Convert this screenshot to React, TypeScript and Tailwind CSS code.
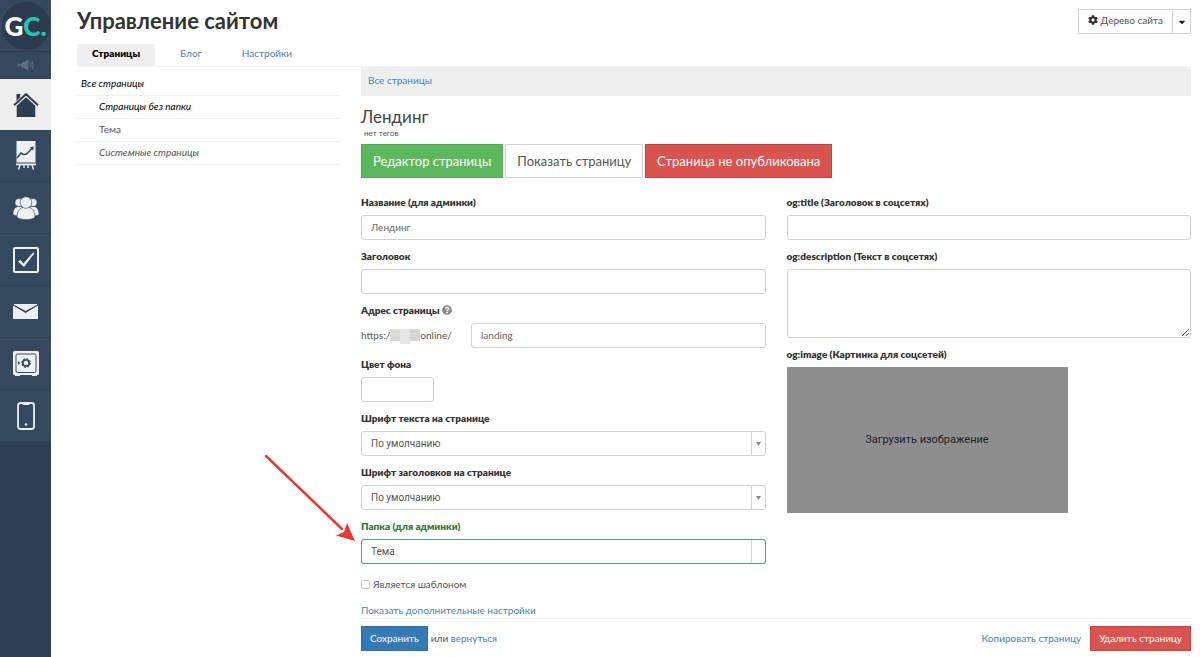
import { useState, type ReactNode } from "react";
import { FaCog, FaCaretDown, FaQuestionCircle } from "react-icons/fa";
import clsx from "clsx";

const tabs = ["Страницы", "Блог", "Настройки"];

const folders = [
  { name: "Все страницы", className: "pl-1 italic text-black" },
  { name: "Страницы без папки", className: "pl-[22px] italic text-black" },
  { name: "Тема", className: "pl-[22px] text-[#555]" },
  { name: "Системные страницы", className: "pl-[22px] italic text-[#555]" },
];

function HomeIcon() {
  return (
    <svg width="26" height="26" viewBox="0 0 26 26">
      <path d="M3.5 2h3.700v3.200L3.500 8.800z" fill="#2c3e50" />
      <path
        d="M1 13.300 13 2.200l12 11.100"
        fill="none"
        stroke="#2c3e50"
        strokeWidth="2"
      />
      <path d="M13 5.200 22.300 13.800V25H3.700V13.800z" fill="#2c3e50" />
    </svg>
  );
}

function ChartIcon() {
  return (
    <svg width="22" height="30" viewBox="0 0 22 30">
      <path d="M1.500 0h19v21.500h-19z" fill="#ecf0f1" />
      <path d="M1 22.500h20v1.800H1z" fill="#ecf0f1" />
      <path
        d="m5 24-1.500 4.500M9 24v3M13 24v3M17 24l1.500 4.500"
        stroke="#ecf0f1"
        strokeWidth="1.4"
      />
      <path
        d="m2 17 4-5 2.500 1.500 3-.5 6-6"
        fill="none"
        stroke="#34495e"
        strokeWidth="1.5"
      />
      <path d="m18.800 5.500-.5 4-3.500-3z" fill="#34495e" />
    </svg>
  );
}

function UsersIcon() {
  return (
    <svg
      width="26"
      height="24"
      viewBox="0 0 26 24"
      fill="#ecf0f1"
      stroke="#34495e"
      strokeWidth=".6"
    >
      <circle cx="6" cy="6.500" r="4" />
      <circle cx="20" cy="6.500" r="4" />
      <path d="M0 18.500c0-5 2-8 6-8s6 2 6 9c-4 1-9 1-12-1zM26 18.500c0-5-2-8-6-8s-6 2-6 9c4 1 9 1 12-1z" />
      <path d="M4 21c0-6 3-10 9-10s9 4 9 10c-3 3.500-15 3.500-18 0z" />
      <circle cx="13" cy="6.500" r="5.800" />
    </svg>
  );
}

function CheckIcon() {
  return (
    <svg width="26" height="26" viewBox="0 0 26 26" fill="none">
      <rect
        x="1"
        y="1"
        width="24"
        height="24"
        rx="1"
        stroke="#ecf0f1"
        strokeWidth="2"
      />
      <path d="m5 14.500 2.500-1.500 3 3.500L20 5.500l1.500.7L11 20z" fill="#ecf0f1" />
    </svg>
  );
}

function MailIcon() {
  return (
    <svg width="25" height="15" viewBox="0 0 25 15">
      <path d="M0 1.500V15h25V1.500L12.500 9z" fill="#ecf0f1" />
      <path d="M1.500 0h22l1 .5L12.500 7 .5.5z" fill="#ecf0f1" />
    </svg>
  );
}

function SafeIcon() {
  return (
    <svg width="26" height="26" viewBox="0 0 26 26" fill="none">
      <path
        d="M1.500 0h23A1.500 1.500 0 0 1 26 1.500v21a1.500 1.500 0 0 1-1.500 1.500H24v1h-5v-1H7v1H2v-1h-.5A1.500 1.500 0 0 1 0 22.500v-21A1.500 1.500 0 0 1 1.500 0z"
        fill="#ecf0f1"
      />
      <rect x="3" y="3" width="20" height="18.500" rx="1.500" stroke="#34495e" />
      <circle cx="13" cy="12" r="3.200" stroke="#34495e" strokeWidth="1.800" />
      <circle
        cx="13"
        cy="12"
        r="4.500"
        stroke="#34495e"
        strokeWidth="1"
        strokeDasharray="1.770 1.770"
      />
      <path d="m5 10 2.300 2L5 14z" fill="#34495e" />
    </svg>
  );
}

function PhoneIcon() {
  return (
    <svg width="18" height="28" viewBox="0 0 18 28" fill="none">
      <rect
        x="1"
        y="1"
        width="16"
        height="26"
        rx="2.500"
        stroke="#ecf0f1"
        strokeWidth="1.800"
      />
      <path d="M5 1h8l-1 2H6z" fill="#ecf0f1" />
      <circle cx="9" cy="22.500" r="1.300" fill="#ecf0f1" />
    </svg>
  );
}

const menu = [
  { label: "Аналитика", icon: <ChartIcon /> },
  { label: "Пользователи", icon: <UsersIcon /> },
  { label: "Задачи", icon: <CheckIcon /> },
  { label: "Сообщения", icon: <MailIcon /> },
  { label: "Продажи", icon: <SafeIcon /> },
  { label: "Приложение", icon: <PhoneIcon /> },
];

function Sidebar() {
  return (
    <nav className="w-[51px] shrink-0 bg-[#2f4052]">
      <a
        href="#"
        className="flex h-[51px] items-center justify-center bg-[#34495e]"
      >
        <span className="flex size-12 items-center justify-center rounded-full bg-[#2b3b4d] text-[26px] leading-none font-black text-white">
          G<span className="text-[#1fc8b4]">C.</span>
        </span>
      </a>
      <button
        aria-label="Новости"
        className="flex h-7 w-full items-center justify-center border-y border-[#2c3e50] bg-[#34495e]"
      >
        <svg width="17" height="12" viewBox="0 0 17 12" fill="#5b6e82">
          <circle cx="2" cy="6" r="1.500" />
          <path d="M4 4.500 11.500.500v11L4 7.500z" />
          <path
            d="M13 3c1.300 2 1.300 4 0 6M15 2c1.500 3 1.500 5 0 8"
            fill="none"
            stroke="#5b6e82"
          />
        </svg>
      </button>
      <a
        href="#"
        aria-label="Главная"
        className="flex h-[51px] items-center justify-center bg-[#eee]"
      >
        <HomeIcon />
      </a>
      {menu.map((item) => (
        <a
          key={item.label}
          href="#"
          aria-label={item.label}
          className="flex h-[52px] items-center justify-center border-b border-[#2e4154] bg-[#34495e]"
        >
          {item.icon}
        </a>
      ))}
    </nav>
  );
}

function Field({
  id,
  label,
  hint,
  green,
  children,
}: {
  id: string;
  label: string;
  hint?: ReactNode;
  green?: boolean;
  children: ReactNode;
}) {
  return (
    <div className="mb-2">
      <div className="mb-[3px] flex h-[18px] items-center gap-0.5 pb-0.5">
        <label
          htmlFor={id}
          className={clsx(
            "font-extrabold",
            green ? "text-[#3c763d]" : "text-[#333]",
          )}
        >
          {label}
        </label>
        {hint}
      </div>
      {children}
    </div>
  );
}

const inputClass =
  "block h-[25px] w-full rounded-[3px] border border-[#d2d2d2] bg-white px-[9px] pb-0.5 text-[#666] outline-none";

function Select({
  id,
  options,
  green,
}: {
  id: string;
  options: string[];
  green?: boolean;
}) {
  return (
    <div
      className={clsx(
        "relative rounded-[3px] border bg-white",
        green ? "border-green-700/70" : "border-[#d2d2d2]",
      )}
    >
      <select
        id={id}
        className="block h-[23px] w-full appearance-none bg-transparent pr-5 pl-[9px] font-['Roboto',sans-serif] text-[10px] text-[#555] outline-none"
      >
        {options.map((option) => (
          <option key={option}>{option}</option>
        ))}
      </select>
      <span className="pointer-events-none absolute inset-y-0 right-0 flex w-[14px] items-center justify-center border-l border-[#d2d2d2]">
        {!green && (
          <svg width="5" height="4" viewBox="0 0 5 4" fill="#888">
            <path d="M0 0h5L2.500 4z" />
          </svg>
        )}
      </span>
    </div>
  );
}

export default function App() {
  const [activeTab, setActiveTab] = useState("Страницы");
  const [title, setTitle] = useState("Лендинг");
  const [slug, setSlug] = useState("landing");

  return (
    <div className="flex min-h-screen bg-white font-['Lato',sans-serif] text-[10px] leading-[18px] text-[#555]">
      <Sidebar />

      <main className="relative min-w-0 flex-1 pr-[9px] pl-[26px]">
        <header className="flex h-11 items-start justify-between">
          <h1 className="pt-2 text-[22px] leading-[26px] font-bold text-[#333]">
            Управление сайтом
          </h1>
          <div className="mt-[9px] flex h-[25px] border border-[#d2d2d2]">
            <button className="flex items-center gap-[3px] px-[9px] pb-1">
              <FaCog className="size-[10px] text-[#333]" />
              Дерево сайта
            </button>
            <button
              aria-label="Ещё"
              className="flex w-[18px] items-center justify-center border-l border-[#d2d2d2]"
            >
              <FaCaretDown className="size-[10px] text-[#222]" />
            </button>
          </div>
        </header>

        <div className="flex h-[23px] gap-[10px] border-b border-[#f3f3f3]">
          {tabs.map((tab) => (
            <button
              key={tab}
              onClick={() => setActiveTab(tab)}
              className={clsx(
                "px-[15px] pb-1",
                tab === activeTab
                  ? "bg-[#efefef] font-extrabold text-black"
                  : "text-[#4a7fb8]",
              )}
            >
              {tab}
            </button>
          ))}
        </div>

        <div className="flex gap-[21px]">
          <ul className="w-[263px] shrink-0 pt-[6px]">
            {folders.map((folder) => (
              <li
                key={folder.name}
                className={clsx(
                  "flex h-[23px] items-center border-b border-[#f0f0f0] pb-0.5",
                  folder.className,
                )}
              >
                <a href="#">{folder.name}</a>
              </li>
            ))}
          </ul>

          <section className="min-w-0 flex-1">
            <div className="flex h-[29px] items-center bg-[#efefef] px-[7px] pb-1">
              <a href="#" className="text-[#4a7fb8]">
                Все страницы
              </a>
            </div>
            <h2 className="mt-[10px] text-[17px] leading-[22px] text-[#444]">
              Лендинг
            </h2>
            <p className="pl-[3px] text-[8px] leading-[10px]">нет тегов</p>
            <div className="mt-[6px] flex gap-0.5 text-[13px]">
              <button className="h-[34px] border border-[#4cae4c] bg-[#5cb85c] px-[11px] text-white">
                Редактор страницы
              </button>
              <button className="h-[34px] border border-[#d2d2d2] bg-white px-[11px]">
                Показать страницу
              </button>
              <button className="h-[34px] border border-[#d43f3a] bg-[#d9534f] px-[11px] text-white">
                Страница не опубликована
              </button>
            </div>

            <div className="mt-4 grid grid-cols-2 gap-[21px]">
              <div>
                <Field id="name" label="Название (для админки)">
                  <input
                    id="name"
                    className={inputClass}
                    value={title}
                    onChange={(e) => setTitle(e.target.value)}
                  />
                </Field>
                <Field id="heading" label="Заголовок">
                  <input id="heading" className={inputClass} />
                </Field>
                <Field
                  id="slug"
                  label="Адрес страницы"
                  hint={<FaQuestionCircle className="size-[10px] text-[#888]" />}
                >
                  <div className="flex items-center">
                    <div className="flex w-[110px] shrink-0 items-center pb-0.5">
                      https:/
                      <span className="flex h-3 w-[30px]">
                        <span className="flex-1 bg-[#d9dbd9]" />
                        <span className="h-[15px] flex-1 bg-[#e6e6e6]" />
                        <span className="flex-1 bg-[#d4d6d4]" />
                      </span>
                      online/
                    </div>
                    <input
                      id="slug"
                      className={inputClass}
                      value={slug}
                      onChange={(e) => setSlug(e.target.value)}
                    />
                  </div>
                </Field>
                <Field id="background" label="Цвет фона">
                  <div className="w-[73px]">
                    <input id="background" className={inputClass} />
                  </div>
                </Field>
                <Field id="text-font" label="Шрифт текста на странице">
                  <Select id="text-font" options={["По умолчанию"]} />
                </Field>
                <Field id="heading-font" label="Шрифт заголовков на странице">
                  <Select id="heading-font" options={["По умолчанию"]} />
                </Field>
                <Field id="folder" label="Папка (для админки)" green>
                  <Select id="folder" options={["Тема"]} green />
                </Field>
                <label className="mt-3 flex items-center gap-[3px] pb-0.5 leading-4">
                  <input
                    type="checkbox"
                    className="size-[9px] appearance-none rounded-[2px] border border-[#ccc] checked:bg-[#337ab7]"
                  />
                  Является шаблоном
                </label>
              </div>

              <div>
                <Field id="og-title" label="og:title (Заголовок в соцсетях)">
                  <input id="og-title" className={inputClass} />
                </Field>
                <Field
                  id="og-description"
                  label="og:description (Текст в соцсетях)"
                >
                  <textarea
                    id="og-description"
                    className="block h-[69px] w-full rounded-[3px] border border-[#d2d2d2] px-[9px] outline-none"
                  />
                </Field>
                <Field id="og-image" label="og:image (Картинка для соцсетей)">
                  <button
                    id="og-image"
                    className="h-[146px] w-[281px] bg-[#8e8e8e] font-['Roboto',sans-serif] text-[11px] text-[#222]"
                  >
                    Загрузить изображение
                  </button>
                </Field>
              </div>
            </div>

            <a href="#" className="mt-2 block leading-4 text-[#4a7fb8]">
              Показать дополнительные настройки
            </a>
            <footer className="flex items-center border-t border-[#eee] pt-[7px] pb-[6px]">
              <button className="mr-[3px] h-[25px] border border-[#2e6da4] bg-[#337ab7] px-2 pb-0.5 text-white">
                Сохранить
              </button>
              <span className="pb-0.5">
                или{" "}
                <a href="#" className="text-[#4a7fb8]">
                  вернуться
                </a>
              </span>
              <a href="#" className="mr-[9px] ml-auto pb-0.5 text-[#4a7fb8]">
                Копировать страницу
              </a>
              <button className="h-[25px] border border-[#d43f3a] bg-[#d9534f] px-2 pb-0.5 text-white">
                Удалить страницу
              </button>
            </footer>
          </section>
        </div>

        {/* pointer to the folder field */}
        <svg
          className="pointer-events-none absolute top-[453px] left-[212px]"
          width="94"
          height="90"
          viewBox="0 0 94 90"
          fill="#e53a30"
        >
          <path
            d="m3 3 76 73"
            stroke="#e53a30"
            strokeWidth="2.500"
            strokeLinecap="round"
          />
          <path d="M92 88 73 82.500l8-3.500 3-9z" />
        </svg>
      </main>
    </div>
  );
}
